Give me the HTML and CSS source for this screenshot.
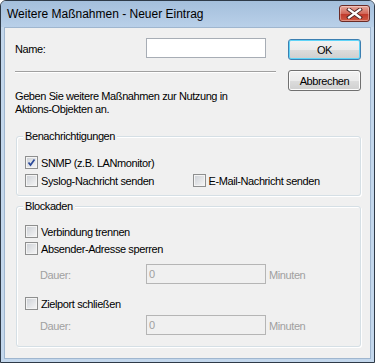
FILE: index.html
```html
<!DOCTYPE html>
<html lang="de">

<head>
    <meta charset="UTF-8">
    <meta name="viewport" content="width=device-width, initial-scale=1.0">
    <title>Weitere Maßnahmen - Neuer Eintrag</title>
    <link rel="stylesheet" href="styles.css">
</head>

<body>
    <div class="window">
        <div class="titlebar">
            <span class="title">Weitere Maßnahmen - Neuer Eintrag</span>
            <button class="close-btn" type="button" aria-label="Schließen">
                <svg width="17" height="11" viewBox="0 0 17 11">
                    <path d="M3 1.5 L14 9.5 M14 1.5 L3 9.5" stroke="#4a2424" stroke-width="4" stroke-linecap="square" fill="none"/>
                    <path d="M3 1.5 L14 9.5 M14 1.5 L3 9.5" stroke="#ffffff" stroke-width="2.2" stroke-linecap="square" fill="none"/>
                </svg>
            </button>
        </div>

        <div class="client">
            <div class="top">
                <div class="top-main">
                    <div class="name-row">
                        <label for="name">Name:</label>
                        <input type="text" id="name" class="textbox">
                    </div>
                    <div class="separator"></div>
                    <p class="hint">Geben Sie weitere Maßnahmen zur Nutzung in<br>Aktions-Objekten an.</p>
                </div>
                <div class="buttons">
                    <button class="btn btn-default" type="button">OK</button>
                    <button class="btn" type="button">Abbrechen</button>
                </div>
            </div>

            <div class="group group-notify">
                <span class="group-title">Benachrichtigungen</span>
                <div class="check-row">
                    <span class="checkbox checked">
                        <svg width="11" height="11" viewBox="0 0 11 11">
                            <path d="M2.5 5.5 L4.5 8 L8.5 2.5" stroke="#2c4a9a" stroke-width="1.7" fill="none"/>
                        </svg>
                    </span>
                    <span>SNMP (z.B. LANmonitor)</span>
                </div>
                <div class="check-row">
                    <div class="check-col">
                        <span class="checkbox"></span>
                        <span>Syslog-Nachricht senden</span>
                    </div>
                    <div class="check-col">
                        <span class="checkbox"></span>
                        <span>E-Mail-Nachricht senden</span>
                    </div>
                </div>
            </div>

            <div class="group group-block">
                <span class="group-title">Blockaden</span>
                <div class="check-row">
                    <span class="checkbox"></span>
                    <span>Verbindung trennen</span>
                </div>
                <div class="check-row">
                    <span class="checkbox"></span>
                    <span>Absender-Adresse sperren</span>
                </div>
                <div class="duration-row first">
                    <span class="duration-label">Dauer:</span>
                    <input type="text" class="textbox" value="0" disabled>
                    <span class="unit">Minuten</span>
                </div>
                <div class="check-row port">
                    <span class="checkbox"></span>
                    <span>Zielport schließen</span>
                </div>
                <div class="duration-row second">
                    <span class="duration-label">Dauer:</span>
                    <input type="text" class="textbox" value="0" disabled>
                    <span class="unit">Minuten</span>
                </div>
            </div>
        </div>
    </div>
</body>
</html>
```

FILE: styles.css
```css
body {
    margin: 0;
    font-family: "Liberation Sans", Arial, sans-serif;
    background-color: #ffffff;
}

.window {
    width: 375px;
    height: 363px;
    box-sizing: border-box;
    border: 1px solid #2e3a48;
    border-radius: 6px 6px 0 0;
    background: #c3d7ec;
    padding: 0 3px 3px 3px;
    display: flex;
    flex-direction: column;
}

.titlebar {
    height: 26px;
    margin: 0 -3px;
    padding: 4px 4px 0 6px;
    box-sizing: border-box;
    display: flex;
    justify-content: space-between;
    align-items: flex-start;
    background: linear-gradient(#a4bfdc, #b9d0e9);
    border-radius: 5px 5px 0 0;
}

.title {
    font-size: 12px;
    line-height: 16px;
    padding-top: 1px;
    color: #000000;
}

.close-btn {
    width: 31px;
    height: 17px;
    padding: 0;
    border: 1px solid #6b2b26;
    border-radius: 3px;
    background: linear-gradient(#e8a99c, #d2685a 50%, #c0392b 55%, #cf5a45);
    box-shadow: inset 0 0 0 1px rgba(255, 255, 255, 0.35);
    display: flex;
    justify-content: center;
    align-items: center;
}

.client {
    flex: 1;
    border: 1px solid #9fb6cf;
    background-color: #f0f0f0;
    padding: 10px 0 0 10px;
    font-size: 11px;
    letter-spacing: -0.4px;
    color: #000000;
}

.top {
    display: flex;
}

.top-main {
    width: 261px;
}

.name-row {
    display: flex;
    align-items: center;
    height: 20px;
}

.name-row label {
    width: 131px;
    padding-top: 2px;
}

.textbox {
    width: 120px;
    height: 20px;
    box-sizing: border-box;
    margin: 0;
    border: 1px solid #a7adb5;
    background: #ffffff;
    font-family: inherit;
    font-size: 11px;
    padding: 0 2px;
}

.textbox:disabled {
    border-color: #b5b5b5;
    background: #f0f0f0;
    color: #a0a0a0;
}

.separator {
    margin-top: 13px;
    border-top: 1px solid #a0a0a0;
    border-bottom: 1px solid #ffffff;
}

.hint {
    margin: 17px 0 0 0;
    line-height: 13px;
}

.buttons {
    margin-left: 12px;
    padding-top: 1px;
    display: flex;
    flex-direction: column;
    gap: 10px;
}

.btn {
    width: 73px;
    height: 21px;
    padding: 0;
    border: 1px solid #707070;
    border-radius: 3px;
    background: linear-gradient(#f2f2f2, #ebebeb 50%, #dddddd 50%, #cfcfcf);
    box-shadow: inset 0 0 0 1px #fcfcfc;
    font-family: inherit;
    font-size: 11px;
    letter-spacing: -0.4px;
    color: #000000;
}

.btn-default {
    border-color: #3c7fb1;
    box-shadow: inset 0 0 0 1px #5fd4f8;
}

.group {
    width: 345px;
    box-sizing: border-box;
    margin-left: 1px;
    border: 1px solid #d5dfe5;
    border-radius: 3px;
    padding: 0 0 6px 8px;
    box-shadow: inset 1px 1px 0 #ffffff, 1px 1px 0 #ffffff;
}

.group-notify {
    margin-top: 20px;
}

.group-block {
    margin-top: 10px;
    padding-bottom: 11px;
}

.group-title {
    display: inline-block;
    margin: -7px 0 0 -2px;
    padding: 0 2px;
    line-height: 13px;
    background-color: #f0f0f0;
    vertical-align: top;
}

.group-notify .group-title {
    margin-bottom: 11px;
}

.group-block .group-title {
    margin-bottom: 10px;
}

.check-row {
    display: flex;
    align-items: center;
    height: 17px;
}

.group-notify .check-row + .check-row {
    margin-top: 1px;
}

.check-col {
    display: flex;
    align-items: center;
    width: 168px;
}

.checkbox {
    width: 13px;
    height: 13px;
    box-sizing: border-box;
    margin-right: 3px;
    border: 1px solid #8e8f8f;
    background: linear-gradient(135deg, #cbcfd5, #f7f7f7);
    box-shadow: inset 0 0 0 1px #f4f4f4;
    display: flex;
    justify-content: center;
    align-items: center;
}

.checkbox svg {
    display: block;
}

.duration-row {
    display: flex;
    align-items: center;
    height: 20px;
    color: #a0a0a0;
}

.duration-row.first {
    margin-top: 7px;
}

.duration-row.second {
    margin-top: 3px;
}

.check-row.port {
    margin-top: 11px;
}

.duration-label {
    width: 106px;
    padding-left: 15px;
    padding-top: 2px;
}

.unit {
    margin-left: 3px;
    padding-top: 2px;
}
```
